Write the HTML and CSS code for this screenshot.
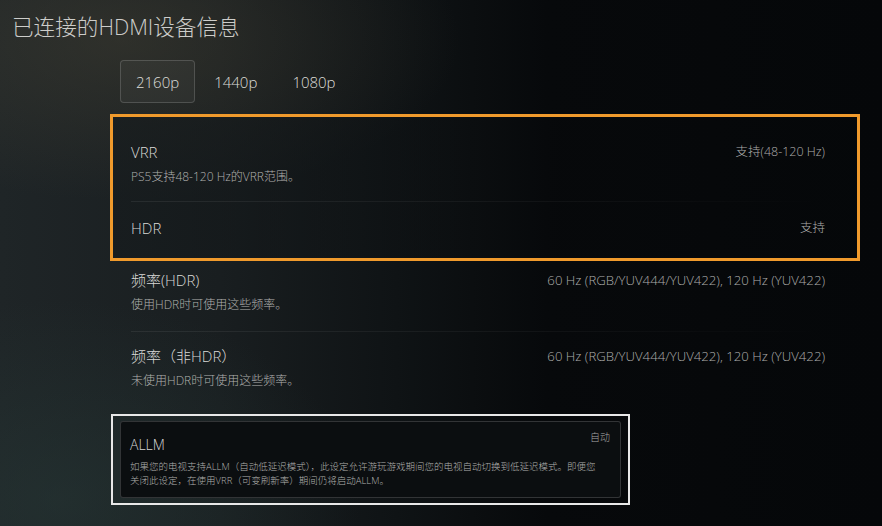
FILE: index.html
```html
<!DOCTYPE html>
<html lang="zh-CN">
<head>
<meta charset="utf-8">
<link rel="stylesheet" href="styles.css">
</head>
<body>
<div class="screen">
  <h1 class="title">已连接的HDMI设备信息</h1>
  <div class="tabs">
    <div class="tab active">2160p</div>
    <div class="tab">1440p</div>
    <div class="tab">1080p</div>
  </div>
  <div class="list">
    <div class="focus">
      <div class="row first">
        <div class="row-main">
          <div class="row-title">VRR</div>
          <div class="row-sub">PS5支持48-120 Hz的VRR范围。</div>
        </div>
        <div class="row-value">支持(48-120 Hz)</div>
      </div>
      <div class="divider"></div>
      <div class="row last">
        <div class="row-main">
          <div class="row-title">HDR</div>
        </div>
        <div class="row-value">支持</div>
      </div>
    </div>
    <div class="row plain r3">
      <div class="row-main">
        <div class="row-title">频率(HDR)</div>
        <div class="row-sub">使用HDR时可使用这些频率。</div>
      </div>
      <div class="row-value long">60 Hz (RGB/YUV444/YUV422), 120 Hz (YUV422)</div>
    </div>
    <div class="divider plain-div"></div>
    <div class="row plain r4">
      <div class="row-main">
        <div class="row-title">频率（非HDR）</div>
        <div class="row-sub">未使用HDR时可使用这些频率。</div>
      </div>
      <div class="row-value long">60 Hz (RGB/YUV444/YUV422), 120 Hz (YUV422)</div>
    </div>
  </div>
  <div class="allm">
    <div class="allm-inner">
      <div class="allm-head">
        <div class="allm-title">ALLM</div>
        <div class="allm-value">自动</div>
      </div>
      <div class="allm-desc">如果您的电视支持ALLM（自动低延迟模式），此设定允许游玩游戏期间您的电视自动切换到低延迟模式。即便您<br>关闭此设定，在使用VRR（可变刷新率）期间仍将启动ALLM。</div>
    </div>
  </div>
</div>
</body>
</html>
```
FILE: styles.css
```css
* { box-sizing: border-box; }
html, body { margin: 0; padding: 0; }
body {
  width: 882px;
  height: 526px;
  overflow: hidden;
  font-family: "Open Sans", "Noto Sans CJK SC", sans-serif;
  font-weight: 300;
  background:
    radial-gradient(ellipse 340px 160px at 120px 40px, rgba(70,66,52,0.45), rgba(70,66,52,0) 100%),
    radial-gradient(ellipse 300px 200px at 60px 500px, rgba(40,60,58,0.45), rgba(40,60,58,0) 100%),
    linear-gradient(90deg, #1f2527 0%, #191e20 25%, #0f1315 45%, #07090b 62%, #050709 100%);
  color: #cfcfcf;
}
.screen {
  padding: 12px 0 0 0;
  display: flex;
  flex-direction: column;
}
.title {
  margin: 0 0 0 12px;
  font-size: 21.6px;
  font-weight: 300;
  line-height: 30px;
  color: #cdcdca;
}
.tabs {
  display: flex;
  gap: 3px;
  margin: 18px 0 0 120px;
}
.tab {
  height: 43px;
  padding: 0 15px;
  display: flex;
  align-items: center;
  font-size: 15px;
  color: #dcdcd8;
  border: 1px solid transparent;
  border-radius: 4px;
}
.tab.active {
  border-color: rgba(255,255,255,0.16);
  background: rgba(255,255,255,0.04);
}
.list {
  margin: 11px 0 0 110px;
  width: 750px;
  display: flex;
  flex-direction: column;
}
.focus {
  border: 3px solid #f09a2c;
  padding: 9px 0 4px 0;
  background: linear-gradient(90deg, rgba(22,27,29,0.7), rgba(6,8,10,0.4) 60%);
}
.row {
  display: flex;
  justify-content: space-between;
  align-items: flex-start;
  padding: 16px 32px 16px 18px;
}
.row.plain { padding-left: 21px; padding-right: 35px; }
.row.r3 { padding-top: 9px; padding-bottom: 18px; }
.row.r4 { padding-top: 14px; padding-bottom: 0; }
.row-main {
  display: flex;
  flex-direction: column;
  gap: 7px;
}
.row-title {
  font-size: 15px;
  line-height: 20px;
  color: #d8d8d6;
}
.row-sub {
  font-size: 12px;
  line-height: 16px;
  color: #b0b0ae;
}
.row-value {
  font-size: 12.5px;
  line-height: 20px;
  color: #acacaa;
}
.row-value.long { font-size: 13.2px; }
.divider {
  height: 1px;
  margin: 0 32px 0 18px;
  background: linear-gradient(90deg, rgba(255,255,255,0.07), rgba(255,255,255,0.04) 60%, rgba(255,255,255,0));
}
.divider.plain-div { margin: 0 35px 0 21px; }
.allm {
  margin: 25px 0 0 111px;
  width: 519px;
  height: 91px;
  border: 2px solid #e8e8e8;
  padding: 5px 7px;
}
.allm-inner {
  height: 100%;
  border: 1px solid rgba(255,255,255,0.16);
  border-radius: 3px;
  background: #0b0e10;
  padding: 8px 10px 0 9px;
}
.allm-head {
  display: flex;
  justify-content: space-between;
  align-items: flex-start;
}
.allm-title {
  font-size: 14px;
  line-height: 20px;
  padding-top: 5px;
  color: #d6d6d4;
}
.allm-value {
  font-size: 10px;
  line-height: 14px;
  color: #a8a8a8;
}
.allm-desc {
  margin-top: 5px;
  font-size: 9.5px;
  line-height: 14px;
  color: #b0b0ae;
  white-space: nowrap;
}
```
